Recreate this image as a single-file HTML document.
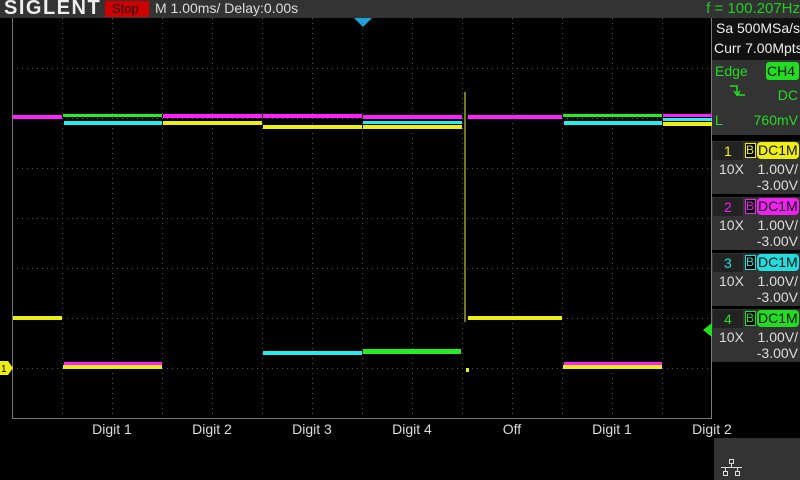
<!DOCTYPE html>
<html><head><meta charset="utf-8"><style>
*{margin:0;padding:0;box-sizing:border-box}
body{width:800px;height:480px;background:#000;position:relative;overflow:hidden;font-family:"Liberation Sans",sans-serif}
.a{position:absolute}
.t{position:absolute;white-space:nowrap}
.r{position:absolute;white-space:nowrap;right:2px;text-align:right}
.lbl{position:absolute;top:421px;color:#ddd;font-size:14px;width:80px;text-align:center}
.pn{position:absolute;left:712px;width:88px;background:#333}
.g{color:#22dd22}
</style></head><body>
<div class="a" style="left:0;top:0;width:800px;height:18px;background:#333"></div>
<div class="t" style="left:4px;top:-3px;color:#eee;font-size:20px;font-weight:bold;letter-spacing:1.5px">SIGLENT</div>
<div class="a" style="left:105px;top:1px;width:44px;height:16px;background:#d00000"></div>
<div class="t" style="left:112px;top:1px;color:#111;font-size:13px">Stop</div>
<div class="t" style="left:155px;top:0px;color:#ddd;font-size:14px">M 1.00ms/ Delay:0.00s</div>
<div class="r" style="right:0;top:0px;color:#22cc22;font-size:15px">f = 100.207Hz</div>
<svg class="a" style="left:354px;top:18px" width="18" height="10"><polygon points="0,0 18,0 9,9" fill="#1aa6dd"/></svg>
<svg class="a" style="left:0;top:0" width="712" height="420">
<defs><pattern id="v" width="50" height="5" patternUnits="userSpaceOnUse" x="12" y="18"><rect x="0" y="0" width="1" height="1" fill="#555"/></pattern>
<pattern id="h" width="5" height="50" patternUnits="userSpaceOnUse" x="12" y="18"><rect x="0" y="0" width="1" height="1" fill="#555"/></pattern></defs>
<rect x="62" y="18" width="650" height="400" fill="url(#v)"/>
<rect x="12" y="68" width="700" height="350" fill="url(#h)"/>
<line x1="12.5" y1="18" x2="12.5" y2="418" stroke="#777"/>
<line x1="12" y1="418.5" x2="712" y2="418.5" stroke="#777"/>
<line x1="711.5" y1="18" x2="711.5" y2="418" stroke="#777"/>
<rect x="13" y="115" width="49" height="4" fill="#ff22ff"/>
<rect x="63" y="114" width="99" height="3" fill="#22ee22"/>
<rect x="64" y="121" width="98" height="4" fill="#22eeee"/>
<rect x="163" y="114" width="99" height="4" fill="#ff22ff"/>
<rect x="163" y="121" width="99" height="4" fill="#eeee11"/>
<rect x="263" y="114" width="99" height="4" fill="#ff22ff"/>
<rect x="263" y="125" width="99" height="4" fill="#eeee11"/>
<rect x="363" y="115" width="99" height="4" fill="#ff22ff"/>
<rect x="363" y="121" width="99" height="3" fill="#22eeee"/>
<rect x="363" y="125" width="99" height="4" fill="#eeee11"/>
<rect x="468" y="115" width="94" height="4" fill="#ff22ff"/>
<rect x="563" y="114" width="99" height="3" fill="#22ee22"/>
<rect x="564" y="121" width="98" height="4" fill="#22eeee"/>
<rect x="663" y="114" width="49" height="3" fill="#ff22ff"/>
<rect x="663" y="118" width="49" height="3" fill="#22eeee"/>
<rect x="663" y="122" width="49" height="4" fill="#eeee11"/>
<rect x="13" y="316" width="49" height="4" fill="#eeee11"/>
<rect x="64" y="362" width="98" height="3" fill="#ff22ff"/>
<rect x="63" y="365" width="99" height="4" fill="#eeee11"/>
<rect x="263" y="351" width="99" height="4" fill="#22eeee"/>
<rect x="363" y="349" width="98" height="5" fill="#22ee22"/>
<rect x="468" y="316" width="94" height="4" fill="#eeee11"/>
<rect x="564" y="362" width="98" height="3" fill="#ff22ff"/>
<rect x="563" y="365" width="99" height="4" fill="#eeee11"/>
<rect x="464" y="92" width="2" height="230" fill="#777722"/>
<rect x="466" y="368" width="3" height="4" fill="#eeee11"/>
</svg>
<svg class="a" style="left:0;top:361px" width="14" height="14"><polygon points="0,0 8,0 13,7 8,14 0,14" fill="#eeee11"/><text x="1" y="11" font-size="10" font-family="Liberation Sans" fill="#000">1</text></svg>
<svg class="a" style="left:703px;top:322px" width="10" height="16"><polygon points="10,0 0,8 10,16" fill="#22dd22"/></svg>
<div class="lbl" style="left:72px">Digit 1</div>
<div class="lbl" style="left:172px">Digit 2</div>
<div class="lbl" style="left:272px">Digit 3</div>
<div class="lbl" style="left:372px">Digit 4</div>
<div class="lbl" style="left:472px">Off</div>
<div class="lbl" style="left:572px">Digit 1</div>
<div class="lbl" style="left:672px">Digit 2</div>
<div class="pn" style="top:18px;height:42px;background:#111"></div>
<div class="t" style="left:716px;top:20px;color:#eee;font-size:14px">Sa 500MSa/s</div>
<div class="t" style="left:714px;top:40px;color:#eee;font-size:14px">Curr 7.00Mpts</div>
<div class="pn" style="top:60px;height:75px"></div>
<div class="t g" style="left:715px;top:63px;font-size:14px">Edge</div>
<div class="a" style="left:766px;top:62px;width:33px;height:18px;background:#22dd22;border-radius:3px"></div>
<div class="t" style="left:767px;top:63px;color:#111;font-size:14px">CH4</div>
<svg class="a" style="left:729px;top:84px" width="18" height="16"><path d="M1 2H8V11H16M5 7L8 11L11 7" stroke="#22dd22" stroke-width="1.5" fill="none"/></svg>
<div class="r g" style="top:87px;font-size:14px">DC</div>
<div class="t g" style="left:715px;top:112px;font-size:14px">L</div>
<div class="r g" style="top:112px;font-size:14px">760mV</div>
<div class="pn" style="top:141px;height:53px"></div>
<div class="pn" style="top:197px;height:53px"></div>
<div class="pn" style="top:253px;height:53px"></div>
<div class="pn" style="top:309px;height:53px"></div>

<div class="a" style="left:713px;top:142px;width:30px;height:18px;background:#222"></div>
<div class="t" style="left:724px;top:143px;color:#eeee11;font-size:14px">1</div>
<div class="a" style="left:745px;top:143px;width:11px;height:15px;border:1px solid #eeee11;background:#000"></div>
<div class="t" style="left:746px;top:143px;color:#eeee11;font-size:12px">B</div>
<div class="a" style="left:757px;top:142px;width:42px;height:17px;background:#eeee11;border-radius:4px"></div>
<div class="t" style="left:758px;top:142px;color:#111;font-size:14px">DC1M</div>
<div class="t" style="left:719px;top:161px;color:#ddd;font-size:14px">10X</div>
<div class="r" style="top:161px;color:#ddd;font-size:14px">1.00V/</div>
<div class="r" style="top:177px;color:#ddd;font-size:14px">-3.00V</div>

<div class="a" style="left:713px;top:198px;width:30px;height:18px;background:#222"></div>
<div class="t" style="left:724px;top:199px;color:#ee22ee;font-size:14px">2</div>
<div class="a" style="left:745px;top:199px;width:11px;height:15px;border:1px solid #ee22ee;background:#000"></div>
<div class="t" style="left:746px;top:199px;color:#ee22ee;font-size:12px">B</div>
<div class="a" style="left:757px;top:198px;width:42px;height:17px;background:#ee22ee;border-radius:4px"></div>
<div class="t" style="left:758px;top:198px;color:#111;font-size:14px">DC1M</div>
<div class="t" style="left:719px;top:217px;color:#ddd;font-size:14px">10X</div>
<div class="r" style="top:217px;color:#ddd;font-size:14px">1.00V/</div>
<div class="r" style="top:233px;color:#ddd;font-size:14px">-3.00V</div>

<div class="a" style="left:713px;top:254px;width:30px;height:18px;background:#222"></div>
<div class="t" style="left:724px;top:255px;color:#22dddd;font-size:14px">3</div>
<div class="a" style="left:745px;top:255px;width:11px;height:15px;border:1px solid #22dddd;background:#000"></div>
<div class="t" style="left:746px;top:255px;color:#22dddd;font-size:12px">B</div>
<div class="a" style="left:757px;top:254px;width:42px;height:17px;background:#22dddd;border-radius:4px"></div>
<div class="t" style="left:758px;top:254px;color:#111;font-size:14px">DC1M</div>
<div class="t" style="left:719px;top:273px;color:#ddd;font-size:14px">10X</div>
<div class="r" style="top:273px;color:#ddd;font-size:14px">1.00V/</div>
<div class="r" style="top:289px;color:#ddd;font-size:14px">-3.00V</div>

<div class="a" style="left:713px;top:310px;width:30px;height:18px;background:#222"></div>
<div class="t" style="left:724px;top:311px;color:#22dd22;font-size:14px">4</div>
<div class="a" style="left:745px;top:311px;width:11px;height:15px;border:1px solid #22dd22;background:#000"></div>
<div class="t" style="left:746px;top:311px;color:#22dd22;font-size:12px">B</div>
<div class="a" style="left:757px;top:310px;width:42px;height:17px;background:#22dd22;border-radius:4px"></div>
<div class="t" style="left:758px;top:310px;color:#111;font-size:14px">DC1M</div>
<div class="t" style="left:719px;top:329px;color:#ddd;font-size:14px">10X</div>
<div class="r" style="top:329px;color:#ddd;font-size:14px">1.00V/</div>
<div class="r" style="top:345px;color:#ddd;font-size:14px">-3.00V</div>

<div class="a" style="left:714px;top:438px;width:86px;height:42px;background:#333"></div>
<svg class="a" style="left:720px;top:458px" width="24" height="20"><g stroke="#ddd" fill="none" stroke-width="1"><rect x="9.5" y="1.5" width="4" height="4"/><rect x="3.5" y="13.5" width="4" height="4"/><rect x="15.5" y="13.5" width="4" height="4"/><path d="M11.5 5.5V9.5M1 9.5H22M5.5 9.5V13.5M17.5 9.5V13.5"/></g></svg>
</body></html>
